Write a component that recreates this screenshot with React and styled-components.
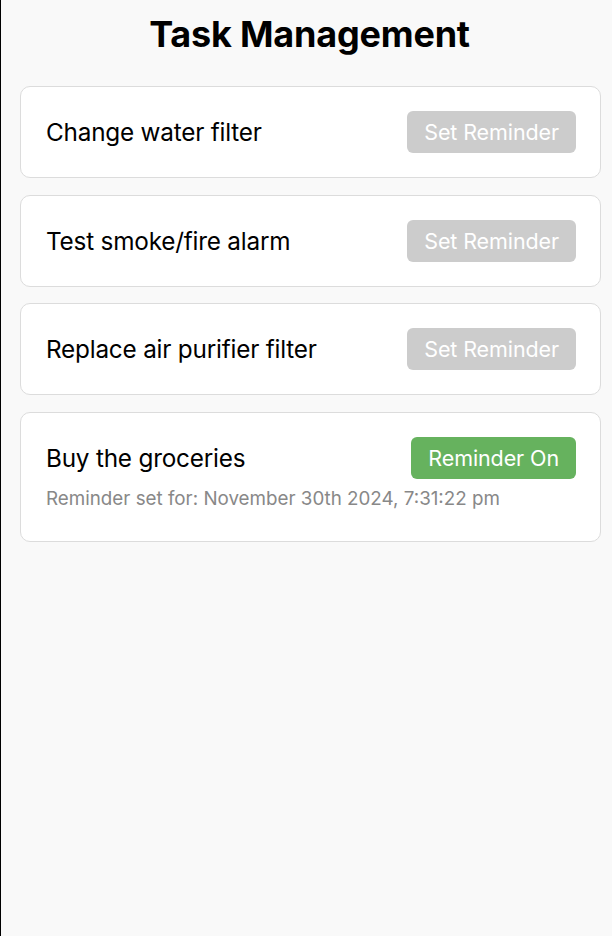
import React from "react";
import styled, { createGlobalStyle } from "styled-components";

const Global = createGlobalStyle`
  html, body { margin: 0; padding: 0; background: #f9f9f9; }
  body { font-family: Inter, "Noto Sans", Roboto, sans-serif; -webkit-font-smoothing: antialiased; }
  * { box-sizing: border-box; }
`;

const Page = styled.div`
  min-height: 936px;
  background: #f9f9f9;
  border-left: 1px solid #000;
  padding: 12px 11px 20px 19px;
`;

const Title = styled.h1`
  margin: 0 0 29px;
  text-align: center;
  font-size: 36px;
  line-height: 45px;
  font-weight: 700;
  color: #000;
  letter-spacing: -0.2px;
  padding-right: 2px;
`;

const List = styled.div`
  display: flex;
  flex-direction: column;
  gap: 16.7px;
`;

const Card = styled.div`
  background: #fff;
  border: 1px solid #dcdcdc;
  border-radius: 10px;
  padding: 24px 24px 24px 25px;
`;

const Row = styled.div`
  display: flex;
  align-items: center;
  justify-content: space-between;
`;

const TaskName = styled.span`
  font-size: 24.3px;
  color: #000;
  letter-spacing: -0.2px;
`;

const Button = styled.button`
  border: none;
  border-radius: 6px;
  height: 42px;
  padding: 0 17px;
  font-family: inherit;
  font-size: 21.5px;
  color: #fff;
  background: ${(p) => (p.$on ? "#66b25e" : "#cccccc")};
  letter-spacing: -0.1px;
`;

const Note = styled.div`
  margin: 8px 0 6px;
  font-size: 18.8px;
  line-height: 24px;
  color: #888;
`;

const tasks = [
  { name: "Change water filter" },
  { name: "Test smoke/fire alarm" },
  { name: "Replace air purifier filter" },
  { name: "Buy the groceries", on: true, note: "Reminder set for: November 30th 2024, 7:31:22 pm" },
];

export default function App() {
  return (
    <>
      <Global />
      <Page>
        <Title>Task Management</Title>
        <List>
          {tasks.map((t) => (
            <Card key={t.name}>
              <Row>
                <TaskName>{t.name}</TaskName>
                <Button $on={t.on}>{t.on ? "Reminder On" : "Set Reminder"}</Button>
              </Row>
              {t.note && <Note>{t.note}</Note>}
            </Card>
          ))}
        </List>
      </Page>
    </>
  );
}
